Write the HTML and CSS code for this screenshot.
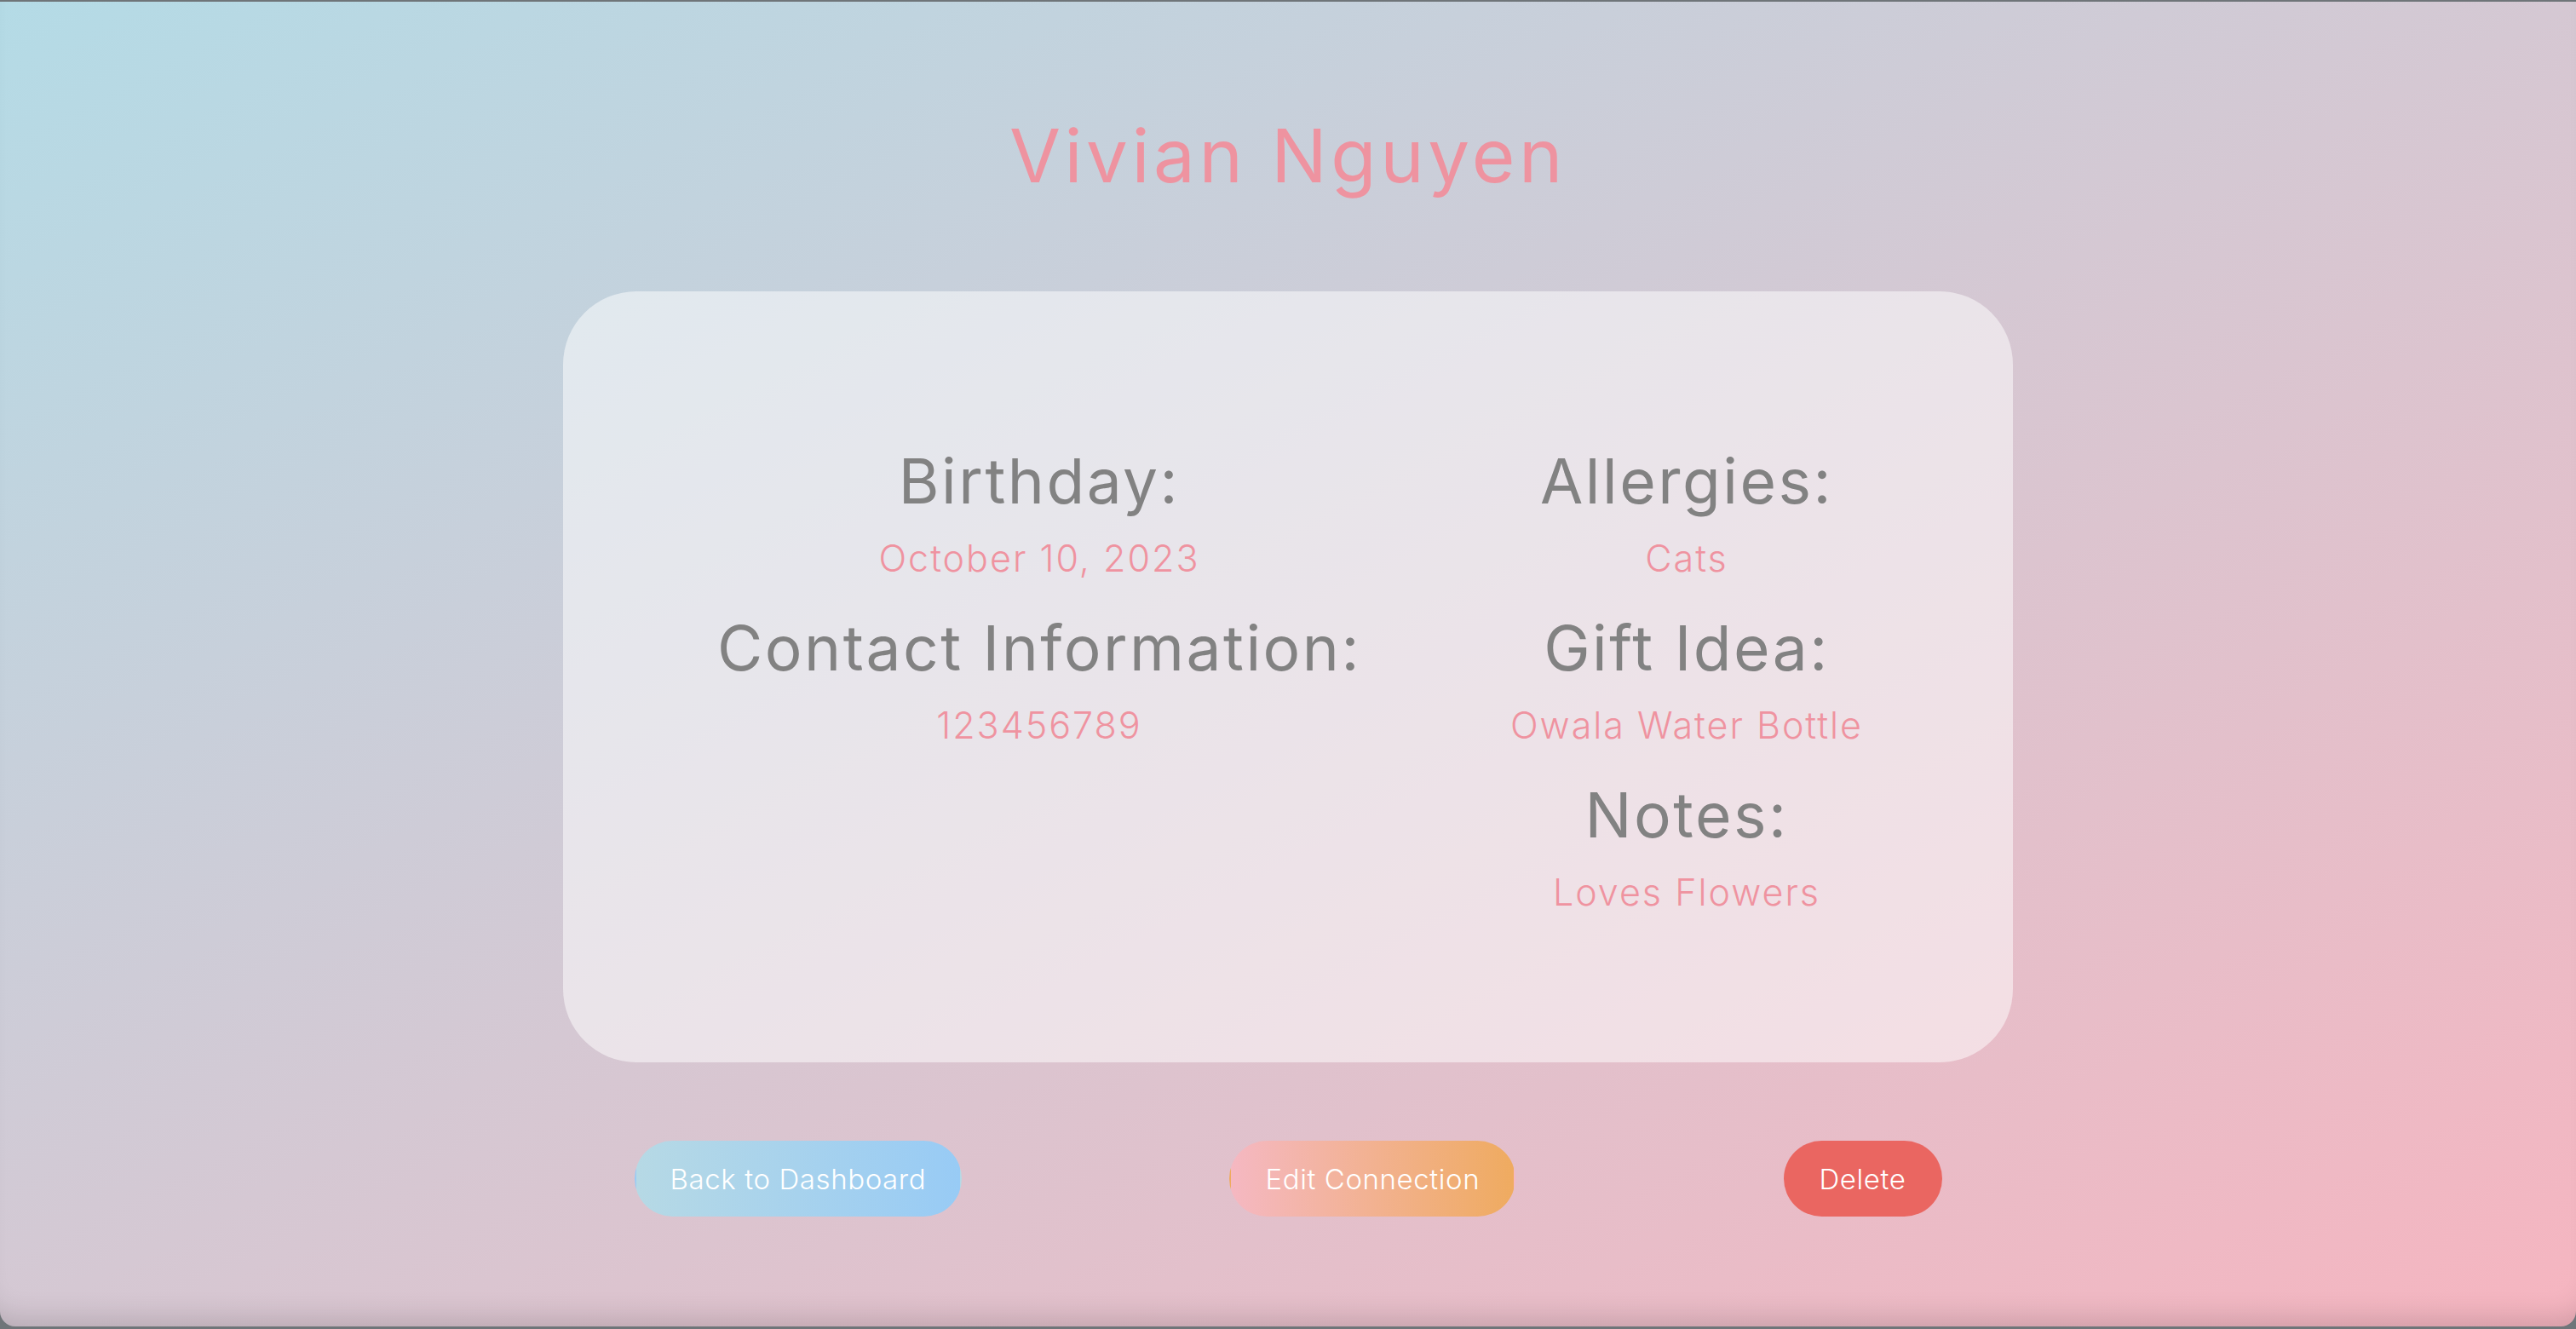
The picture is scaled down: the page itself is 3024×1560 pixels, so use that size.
FILE: index.html
```html
<!DOCTYPE html>
<html lang="en">
<head>
<meta charset="utf-8">
<title>Vivian Nguyen</title>
<link rel="stylesheet" href="styles.css">
</head>
<body>
<div class="window">
  <h1 class="title">Vivian Nguyen</h1>
  <section class="card">
    <div class="col">
      <h2 class="label">Birthday:</h2>
      <p class="value">October 10, 2023</p>
      <h2 class="label next">Contact Information:</h2>
      <p class="value">123456789</p>
    </div>
    <div class="col">
      <h2 class="label">Allergies:</h2>
      <p class="value">Cats</p>
      <h2 class="label next">Gift Idea:</h2>
      <p class="value">Owala Water Bottle</p>
      <h2 class="label next">Notes:</h2>
      <p class="value">Loves Flowers</p>
    </div>
  </section>
  <div class="actions">
    <button class="btn btn-back">Back to Dashboard</button>
    <button class="btn btn-edit">Edit Connection</button>
    <button class="btn btn-delete">Delete</button>
  </div>
</div>
</body>
</html>
```
FILE: styles.css
```css
html {
  background: #6f7579;
}
body {
  margin: 0;
  font-family: "Inter", "Open Sans", "Liberation Sans", sans-serif;
}
.window {
  margin-top: 2px;
  height: 1555px;
  border-radius: 0 0 18px 18px;
  overflow: hidden;
  background: linear-gradient(to bottom right, #b4dbe6, #f6b5c0);
  box-shadow: inset 0 -34px 34px -26px rgba(0, 0, 0, 0.16);
  display: flex;
  flex-direction: column;
  align-items: center;
}
.title {
  margin: 137px 0 0;
  font-size: 87px;
  line-height: 87px;
  font-weight: 400;
  color: #ee93a0;
  letter-spacing: 4.5px;
}
.card {
  margin-top: 116px;
  width: 1702px;
  box-sizing: border-box;
  padding: 186px 0 178px 169px;
  background: rgba(255, 255, 255, 0.5);
  border-radius: 86px;
  display: grid;
  grid-template-columns: 780px 432px;
  column-gap: 154px;
  align-items: start;
}
.col {
  display: flex;
  flex-direction: column;
  align-items: center;
  text-align: center;
}
.label {
  margin: 0;
  font-size: 73px;
  line-height: 73px;
  font-weight: 400;
  color: #828282;
  white-space: nowrap;
  letter-spacing: 2.5px;
}
.label.next {
  margin-top: 47px;
}
.value {
  margin: 33px 0 0;
  font-size: 43px;
  line-height: 43px;
  font-weight: 300;
  color: #ef93a0;
  white-space: nowrap;
  letter-spacing: 2px;
}
.actions {
  margin-top: 92px;
  width: 1535px;
  display: flex;
  justify-content: space-between;
}
.btn {
  height: 89px;
  padding: 0 40px;
  border: 2px solid transparent;
  border-radius: 45px;
  font-family: inherit;
  font-size: 33px;
  font-weight: 300;
  letter-spacing: 0.6px;
  color: #ffffff;
  cursor: pointer;
}
.btn-back {
  background: linear-gradient(to right, #b6d9e5, #98cbf5);
}
.btn-edit {
  background: linear-gradient(to right, #f5b8c2, #efab60);
}
.btn-delete {
  background: #ea6661;
}
```
